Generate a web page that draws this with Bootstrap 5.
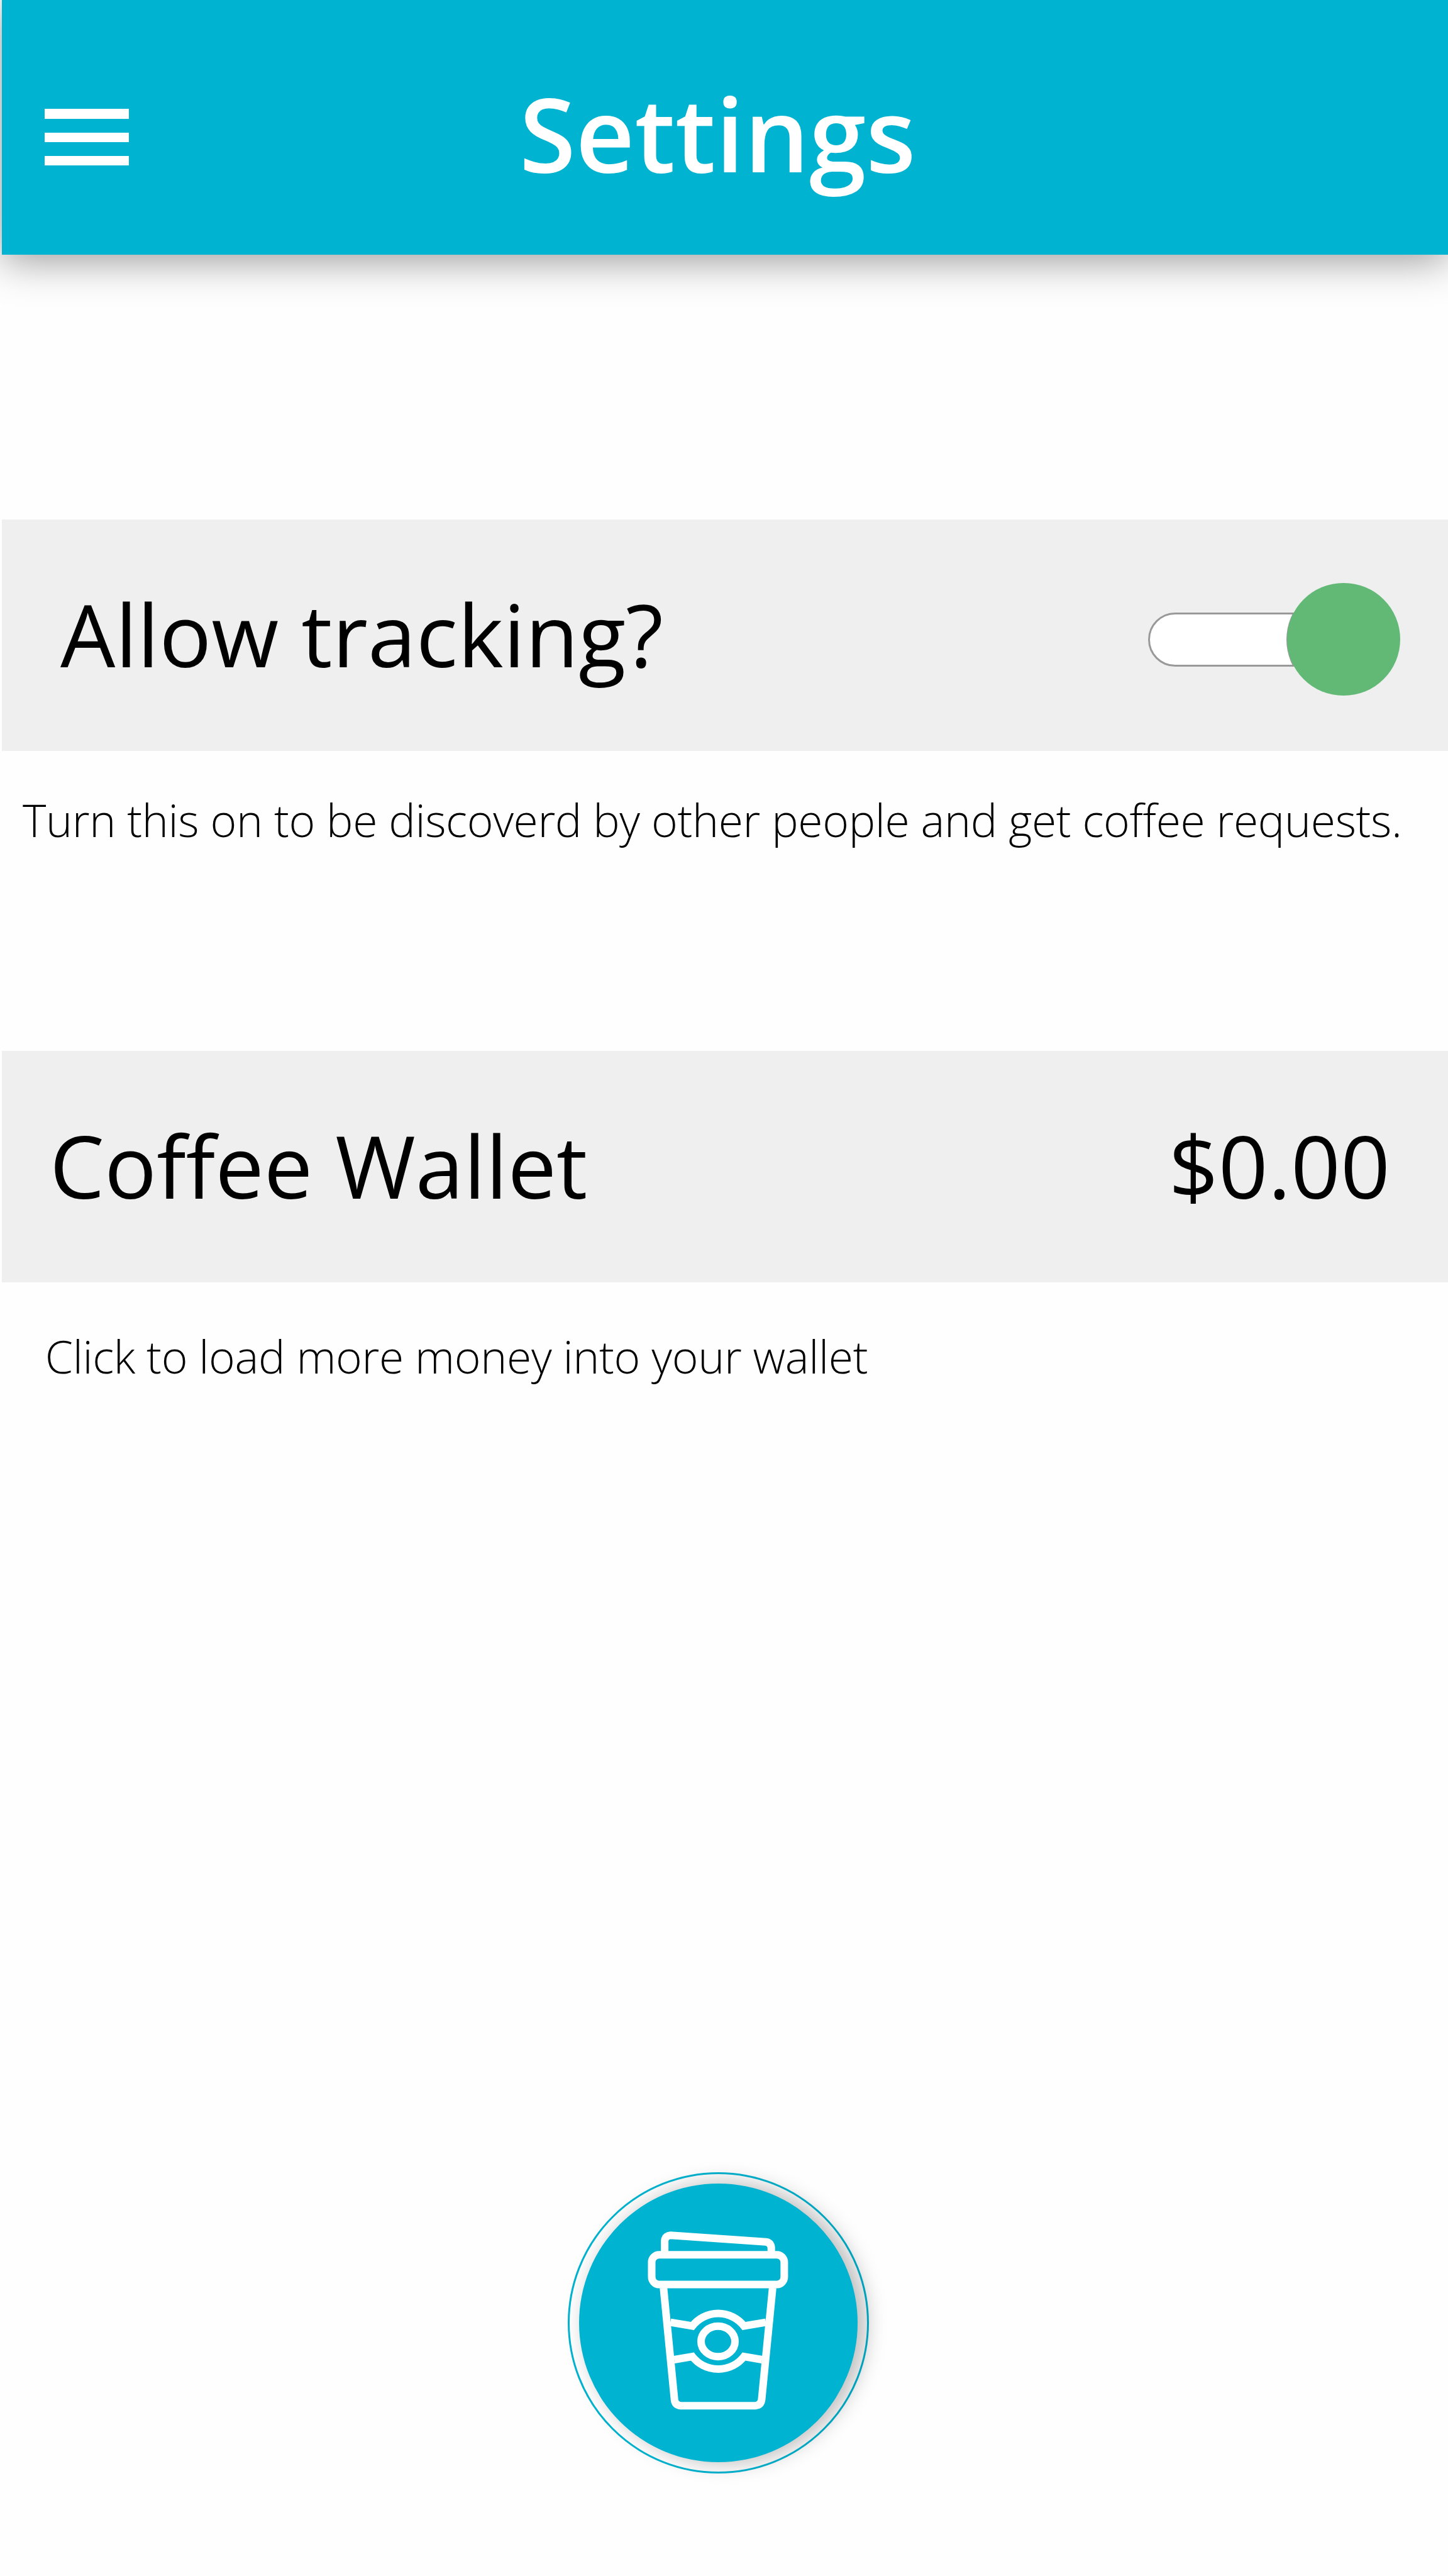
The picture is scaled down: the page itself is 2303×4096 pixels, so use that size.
<!DOCTYPE html>
<html lang="en">
<head>
<meta charset="utf-8">
<meta name="viewport" content="width=device-width, initial-scale=1">
<title>Settings</title>
<link href="https://cdn.jsdelivr.net/npm/bootstrap@5.3.0/dist/css/bootstrap.min.css" rel="stylesheet">
<style>
  :root { --brand: #00b4d1; --panel: #efefef; }
  body { background: #fefefe; color: #000; font-family: "Open Sans", "Noto Sans", sans-serif; }
  .screen { height: 4096px; padding-left: 3px; }
  .topbar { height: 405.3px; padding: 0; background: var(--brand); box-shadow: 0 8px 62px rgba(0,0,0,.41); }
  .menu-btn { margin: 31px 0 0 68px; width: 134px; padding: 0; gap: 22px; }
  .menu-btn span { height: 15.2px; background: #fff; }
  .screen-title { font-size: 162.9px; line-height: 220px; font-weight: 600; color: #fff; margin: 16px 0 0 621px; }
  .settings { padding-top: 420.7px; }
  .setting-row { height: 368.4px; background: var(--panel); font-size: 138.2px; line-height: 200px; padding-bottom: 6px; }
  .tracking { padding-left: 93px; padding-right: 76.5px; }
  .wallet { padding-left: 76px; padding-right: 92px; margin-top: 298.7px; }
  .caption { font-size: 71.4px; letter-spacing: -.36px; line-height: 100px; font-weight: 300; white-space: nowrap; }
  .caption-tracking { margin: 59.4px 0 0 33px; height: 118.4px; }
  .caption-wallet { margin: 67.9px 0 0 68.7px; }
  .toggle { width: 401px; height: 180px; margin-top: 19px; }
  .toggle-track { width: 310px; height: 86px; background: #fff; border: 3px solid #999; border-radius: 43px; overflow: hidden; }
  .toggle-track::after { content: ""; position: absolute; left: 217px; top: -50px; width: 180px; height: 180px; border-radius: 50%; background: #999; }
  .toggle-knob { position: absolute; right: 0; top: 0; width: 179.5px; height: 179.5px; border-radius: 50%; background: #62b975; }
  .coffee-btn { width: 479.4px; height: 479.4px; padding: 0; border: 3px solid var(--brand); border-radius: 50%; margin: 0 0 163px 899.6px; }
  .coffee-disc { width: 442.7px; height: 442.7px; border-radius: 50%; background: var(--brand); box-shadow: 12px 0 34px rgba(0,0,0,.28); }
  .coffee-disc svg { width: 280px; height: 324.2px; margin-top: -5px; }
</style>
</head>
<body>
<div class="screen d-flex flex-column overflow-hidden">
  <header class="topbar navbar flex-nowrap justify-content-start flex-shrink-0">
    <button class="menu-btn btn border-0 rounded-0 d-flex flex-column flex-shrink-0" type="button" aria-label="Menu">
      <span class="w-100"></span><span class="w-100"></span><span class="w-100"></span>
    </button>
    <h1 class="screen-title">Settings</h1>
  </header>

  <main class="settings">
    <div class="setting-row tracking d-flex align-items-center justify-content-between">
      <span>Allow tracking?</span>
      <div class="toggle position-relative d-flex align-items-center" role="switch" aria-checked="true">
        <div class="toggle-track position-relative"></div>
        <div class="toggle-knob"></div>
      </div>
    </div>
    <p class="caption caption-tracking">Turn this on to be discoverd by other people and get coffee requests.</p>

    <div class="setting-row wallet d-flex align-items-center justify-content-between">
      <span>Coffee Wallet</span>
      <span>$0.00</span>
    </div>
    <p class="caption caption-wallet">Click to load more money into your wallet</p>
  </main>

  <button class="coffee-btn btn rounded-circle mt-auto flex-shrink-0 d-flex align-items-center justify-content-center" type="button" aria-label="Coffee">
    <span class="coffee-disc d-flex align-items-center justify-content-center">
      <svg viewBox="0 0 1140 1320" fill="none" stroke="#fff" stroke-width="49">
        <path d="M224.500 229V138Q228 106 263 103L880 145.500Q912 150 915 184V229"/>
        <rect x="140.500" y="229" width="858.500" height="192" rx="48"/>
        <path d="M217 443L288 1167Q292 1203 328 1206H812Q848 1203 852.500 1167L923.500 443"/>
        <path d="M262 666L404 690A212 212 0 0 1 738 690L880 666"/>
        <path d="M286 908L404 888A212 212 0 0 0 738 888L855 908"/>
        <ellipse cx="570" cy="790" rx="110" ry="98.500"/>
      </svg>
    </span>
  </button>
</div>
<script src="https://cdn.jsdelivr.net/npm/bootstrap@5.3.0/dist/js/bootstrap.bundle.min.js"></script>
</body>
</html>
